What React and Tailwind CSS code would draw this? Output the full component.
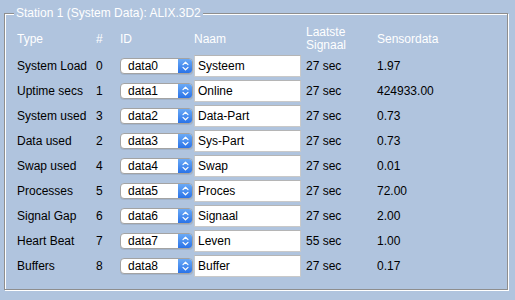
import React from 'react';

const rows = [
  { type: 'System Load', nr: 0, id: 'data0', naam: 'Systeem', signaal: '27 sec', data: '1.97' },
  { type: 'Uptime secs', nr: 1, id: 'data1', naam: 'Online', signaal: '27 sec', data: '424933.00' },
  { type: 'System used', nr: 3, id: 'data2', naam: 'Data-Part', signaal: '27 sec', data: '0.73' },
  { type: 'Data used', nr: 2, id: 'data3', naam: 'Sys-Part', signaal: '27 sec', data: '0.73' },
  { type: 'Swap used', nr: 4, id: 'data4', naam: 'Swap', signaal: '27 sec', data: '0.01' },
  { type: 'Processes', nr: 5, id: 'data5', naam: 'Proces', signaal: '27 sec', data: '72.00' },
  { type: 'Signal Gap', nr: 6, id: 'data6', naam: 'Signaal', signaal: '27 sec', data: '2.00' },
  { type: 'Heart Beat', nr: 7, id: 'data7', naam: 'Leven', signaal: '55 sec', data: '1.00' },
  { type: 'Buffers', nr: 8, id: 'data8', naam: 'Buffer', signaal: '27 sec', data: '0.17' },
];

const SelectBox = ({ value }) => (
  <div className="flex h-[16px] w-[73px] items-stretch overflow-hidden rounded-[4px] border border-[#a3a3a3] bg-white shadow-[0_1px_0_rgba(0,0,0,0.08)]">
    <span className="flex-1 pl-[7px] leading-[14px] text-black">{value}</span>
    <span className="flex w-[14px] items-center justify-center bg-gradient-to-b from-[#6aa9f5] to-[#2a73e8]">
      <svg width="7" height="10" viewBox="0 0 7 10" fill="none" stroke="#fff" strokeWidth="1.2" strokeLinecap="round" strokeLinejoin="round">
        <path d="M1 3.6 L3.5 1.2 L6 3.6" />
        <path d="M1 6.4 L3.5 8.8 L6 6.4" />
      </svg>
    </span>
  </div>
);

const Row = ({ row }) => (
  <>
    <div className="flex h-[25px] items-center">{row.type}</div>
    <div className="flex h-[25px] items-center">{row.nr}</div>
    <div className="flex h-[25px] items-center">
      <SelectBox value={row.id} />
    </div>
    <div className="flex h-[25px] items-center">
      <div className="flex h-[22px] w-[107px] items-center border border-[#c9c9c9] border-t-[#b5b5b5] bg-white pl-[3px] text-black">
        {row.naam}
      </div>
    </div>
    <div className="flex h-[25px] items-center">{row.signaal}</div>
    <div className="flex h-[25px] items-center">{row.data}</div>
  </>
);

export default function App() {
  return (
    <div className="h-[300px] w-[515px] bg-[#b0c4de] pt-[5px] font-['Liberation_Sans',Arial,sans-serif] text-[12px] text-black">
      <fieldset className="ml-[4px] h-[285px] w-[504px] border border-[#8e8e8e] shadow-[inset_1px_1px_0_#fff,1px_1px_0_#fff]">
        <legend className="ml-[9px] bg-[#b0c4de] px-[2px] leading-[16px] text-white">
          Station 1 (System Data): ALIX.3D2
        </legend>

        <div className="grid grid-cols-[79px_24px_74px_112px_71px_1fr] pl-[12px] pt-[4px]">
          {/* Header */}
          <div className="flex h-[28px] items-center text-white">Type</div>
          <div className="flex h-[28px] items-center text-white">#</div>
          <div className="flex h-[28px] items-center text-white">ID</div>
          <div className="flex h-[28px] items-center text-white">Naam</div>
          <div className="flex h-[28px] items-center leading-[13px] text-white">
            Laatste
            <br />
            Signaal
          </div>
          <div className="flex h-[28px] items-center text-white">Sensordata</div>

          {rows.map((row) => (
            <Row key={row.id} row={row} />
          ))}
        </div>
      </fieldset>
    </div>
  );
}
